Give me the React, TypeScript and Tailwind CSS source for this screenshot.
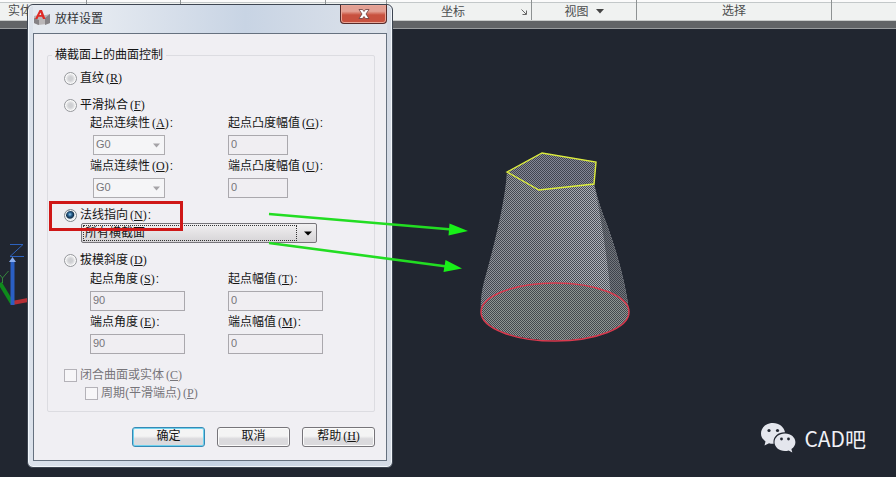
import { useState } from "react";
import type { ReactNode } from "react";

function Key({ k }: { k: string }) {
  return (
    <span className="ml-[2px] font-['Liberation_Serif',serif]">
      (<span className="underline">{k}</span>)
    </span>
  );
}

function Field({ id, label, k, children }: { id: string; label: string; k: string; children: ReactNode }) {
  return (
    <div className="flex flex-col items-start gap-1">
      <label htmlFor={id} className="h-4 leading-4 whitespace-nowrap">
        {label}
        <Key k={k} />
        <span className="ml-px">:</span>
      </label>
      {children}
    </div>
  );
}

function NumberBox({ id, value, wide }: { id: string; value: string; wide?: boolean }) {
  return (
    <input
      id={id}
      type="text"
      disabled
      defaultValue={value}
      className={`${wide ? "w-[95px]" : "w-[60px]"} h-5 border border-[#aaa8ad] bg-[#f0eef2] px-[2px] pb-[2px] font-['Liberation_Sans',sans-serif] text-[11px] text-[#77757a]`}
    />
  );
}

function ContinuityBox({ id }: { id: string }) {
  return (
    <div className="relative ml-[3px] h-5 w-[72px]">
      <select
        id={id}
        disabled
        className="block h-5 w-full appearance-none border border-[#aeacb0] bg-[#f5f5f7] px-[2px] pb-[2px] font-['Liberation_Sans',sans-serif] text-[11px] text-[#77757a] opacity-100"
      >
        <option>G0</option>
      </select>
      <svg className="pointer-events-none absolute top-2 right-[5px] h-[5px] w-[7px]" viewBox="0 0 7 5">
        <path d="M0 .5h7L3.5 4.5z" fill="#a5a3a7" />
      </svg>
    </div>
  );
}

function Radio({
  value,
  label,
  k,
  colon,
  mode,
  onPick,
}: {
  value: string;
  label: string;
  k: string;
  colon?: boolean;
  mode: string;
  onPick: (v: string) => void;
}) {
  return (
    <label className="flex h-4 items-center whitespace-nowrap">
      <input
        type="radio"
        name="surface"
        value={value}
        checked={mode === value}
        onChange={() => onPick(value)}
        className="mr-[3px] size-[13px] appearance-none rounded-full border border-[#96989c] bg-[radial-gradient(circle,#cfd0d3_25%,#eeeeef_60%)] shadow-[inset_0_0_0_1px_#fafafa] checked:border-[#7d858c] checked:bg-[radial-gradient(circle_at_45%_40%,#8fcdf0_0,#2a5f8e_22%,#12304c_42%,#e4ebf0_54%)]"
      />
      <span>
        {label}
        <Key k={k} />
        {colon && <span className="ml-px">:</span>}
      </span>
    </label>
  );
}

function Tick({ label, k }: { label: string; k: string }) {
  return (
    <label className="flex h-4 items-center whitespace-nowrap text-[#77757a]">
      <input
        type="checkbox"
        disabled
        className="mr-[3px] size-[13px] appearance-none border border-[#b4b2b8] bg-[#f7f6f8]"
      />
      <span>
        {label}
        <Key k={k} />
      </span>
    </label>
  );
}

const buttonClass =
  "h-5 w-[73px] rounded-[3px] border bg-linear-to-b from-[#f4f4f4] from-45% to-[#dbdadd] to-60% pb-[2px] leading-4";

function Ribbon() {
  return (
    <header className="shrink-0">
      <div className="flex h-[21px] border-b border-[#c9cbcb] bg-[#f0f2f1] text-[12px] text-[#4c4e4f] shadow-[inset_0_2px_0_#fbfbfb,inset_0_3px_0_#c3c8c9]">
        <div className="w-[87px] border-r border-[#8e9293] pt-[3px] pl-2 leading-4">实体</div>
        <div className="w-[94px] border-r border-[#8e9293]" />
        <div className="w-[145px] border-r border-[#8e9293]" />
        <div className="w-[61px] border-r border-[#8e9293]" />
        <div className="flex w-[145px] items-center justify-between border-r border-[#8e9293] pt-[3px] pr-1 pl-[54px] leading-4">
          坐标
          <svg className="size-[6px]" viewBox="0 0 6 6" fill="none" stroke="#666" strokeWidth="1">
            <path d="M.5.5l4.5 4.5M5.5 1.5v4h-4" />
          </svg>
        </div>
        <button type="button" className="flex w-[105px] items-center justify-center gap-[7px] border-r border-[#8e9293] pt-[3px] leading-4">
          视图
          <svg className="h-[5px] w-2" viewBox="0 0 8 5">
            <path d="M0 0h8L4 4.5z" fill="#444" />
          </svg>
        </button>
        <div className="w-[195px] border-r border-[#8e9293] pt-[3px] text-center leading-4">选择</div>
        <div className="flex-1" />
      </div>
      <div className="h-2 border-b border-[#999c9f] bg-[#626467]" />
    </header>
  );
}

function Model() {
  return (
    <svg className="pointer-events-none absolute top-0 left-0 h-[477px] w-[896px]" viewBox="0 0 896 477" fill="none">
      <defs>
        <pattern id="dots" width="2" height="2" patternUnits="userSpaceOnUse">
          <path d="M0 0h1v1H0zM1 1h1v1H1z" fill="#30343e" fillOpacity=".8" shapeRendering="crispEdges" />
        </pattern>
        <linearGradient id="side" x1="481" x2="630" y1="0" y2="0" gradientUnits="userSpaceOnUse">
          <stop offset="0" stopColor="#8e9299" />
          <stop offset=".4" stopColor="#9a9da2" />
          <stop offset=".8" stopColor="#b0b3ba" />
        </linearGradient>
        <clipPath id="solid">
          <path d="M507 172L542 153L596 162L594 184Q599 206 607 225Q624 272 629 311A74 29 0 0 1 481 311Q480 298 484 282Q505 207 507 172Z" />
        </clipPath>
      </defs>
      <g clipPath="url(#solid)">
        <path d="M470 140h170v210H470z" fill="url(#side)" />
        <path d="M594 184Q605 236 611 296L640 320V180z" fill="#74787e" />
        <path d="M507 172L542 153L596 162L594 184L539 190Z" fill="#858795" />
        <ellipse cx="555" cy="312" rx="74" ry="29" fill="#8f9593" />
        <path d="M470 140h170v210H470z" fill="url(#dots)" />
      </g>
      <ellipse cx="555" cy="312" rx="74" ry="29" stroke="#d93a4e" strokeWidth="1.5" />
      <path d="M507 172L542 153L596 162L594 184L539 190Z" stroke="#dcec3c" strokeWidth="1.4" />

      <path d="M0 283L12 303" stroke="#0f8a1c" strokeWidth="4" />
      <path d="M12 303l16-3" stroke="#b52f35" strokeWidth="4" />
      <path d="M12.500 305V260" stroke="#2a5fc4" strokeWidth="4" />
      <path d="M9 262l3.500-5 3.500 5z" fill="#8aaef0" />
      <path d="M10 244.500h13L10 256.500h14" stroke="#2d62bd" />
      <path d="M0 275l2.500 3 6-7M2.500 278v5" stroke="#35863c" />
    </svg>
  );
}

// Red frame and green arrows drawn on top of the dialog
function Marks() {
  return (
    <svg className="pointer-events-none absolute top-0 left-0 h-[477px] w-[896px]" viewBox="0 0 896 477" fill="none">
      <rect x="50.500" y="202.500" width="131" height="27" stroke="#cf1717" strokeWidth="3" />
      <path d="M269 214L452 229.500M269 243L447 266.500" stroke="#22dd22" strokeWidth="2.600" />
      <path d="M468 231L449.500 223.500L448.500 235.500ZM462 268.500L445.500 260L443.500 272Z" fill="#18f018" />
    </svg>
  );
}

function LoftDialog() {
  const [mode, setMode] = useState("normal");
  const [sections, setSections] = useState("all");

  return (
    <section
      aria-labelledby="loft-title"
      className="absolute top-1 left-[27px] w-[366px] rounded-[6px] border border-[#3d4551] bg-[#ccd5e1] bg-linear-to-r from-[#dce2eb] via-[#c6d3e4] to-[#d5dbe5] px-[5px] pb-[6px] shadow-[inset_0_0_0_1px_#f2f6fa]"
    >
      <div className="flex h-7 items-start bg-linear-to-r from-[#e4e9f0] from-20% via-[#c8d4e4] via-60% to-[#dde2ea]">
        <svg className="mt-[5px] ml-px size-4 shrink-0" viewBox="0 0 16 16">
          <path d="M0 6l4-1h8l4-1v9l-3 1-9 1-4-2z" fill="#b9b6b8" />
          <path d="M0 8l5 2v5l-5-2zM11 8l5-4v9l-5 2z" fill="#858286" />
          <path d="M1 9L5.500 0H8l3.500 9H9L8 6.800H4.500L3.500 9zM5.300 5h2L6.500 2.500z" fill="#df2b27" />
        </svg>
        <h1 id="loft-title" className="mt-[6px] ml-[5px] text-[12px] leading-4 text-[#333639]">
          放样设置
        </h1>
        <button
          type="button"
          aria-label="关闭"
          className="ml-auto flex h-[19px] w-[47px] items-center justify-center rounded-b-[4px] border border-t-0 border-[#552b2b] bg-linear-to-b from-[#e3a094] from-35% to-[#c8513f] to-55% shadow-[inset_0_0_0_1px_#e9a698]"
        >
          <svg className="h-[10px] w-3" viewBox="0 0 12 10">
            <path d="M1 .5h3.500L6 2.500 7.500.5H11L8 5l3 4.500H7.500L6 7.500 4.500 9.500H1L4 5z" fill="#fff" stroke="#693c3c" strokeWidth=".8" />
          </svg>
        </button>
      </div>

      <form className="border border-[#66717f] bg-[#f0eff3] py-[13px] pr-[11px] pl-[13px] text-[12px] text-[#151515]">
        <fieldset className="rounded-[2px] border border-[#dcdce1]">
          <legend className="ml-1 h-4 px-[3px] leading-4">横截面上的曲面控制</legend>
          <div className="px-4 pt-[7px] pb-[10px]">
            <Radio value="ruled" label="直纹" k="R" mode={mode} onPick={setMode} />
            <div className="mt-[11px]">
              <Radio value="smooth" label="平滑拟合" k="F" mode={mode} onPick={setMode} />
            </div>
            <div className="mt-[2px] grid grid-cols-[138px_1fr] gap-y-[3px] pl-[26px]">
              <Field id="start-cont" label="起点连续性" k="A">
                <ContinuityBox id="start-cont" />
              </Field>
              <Field id="start-bulge" label="起点凸度幅值" k="G">
                <NumberBox id="start-bulge" value="0" />
              </Field>
              <Field id="end-cont" label="端点连续性" k="O">
                <ContinuityBox id="end-cont" />
              </Field>
              <Field id="end-bulge" label="端点凸度幅值" k="U">
                <NumberBox id="end-bulge" value="0" />
              </Field>
            </div>

            <div className="mt-[9px]">
              <Radio value="normal" label="法线指向" k="N" colon mode={mode} onPick={setMode} />
            </div>
            <div className="relative ml-[17px] h-5 w-[236px]">
              <select
                aria-label="法线指向"
                value={sections}
                onChange={(e) => setSections(e.target.value)}
                className="block h-5 w-full appearance-none rounded-[2px] border border-[#77757a] bg-linear-to-b from-[#f1f0f1] to-[#d6d4d7] px-[3px] leading-4 outline-none"
              >
                <option value="all">所有横截面</option>
                <option value="start">起点横截面</option>
                <option value="end">端点横截面</option>
              </select>
              <span className="pointer-events-none absolute inset-y-[2px] right-5 left-[2px] border border-dotted border-[#333]" />
              <svg className="pointer-events-none absolute top-2 right-[5px] h-[5px] w-2" viewBox="0 0 8 5">
                <path d="M0 .5h8L4 4.500z" fill="#000" />
              </svg>
            </div>

            <div className="mt-[9px]">
              <Radio value="draft" label="拔模斜度" k="D" mode={mode} onPick={setMode} />
            </div>
            <div className="mt-[3px] grid grid-cols-[138px_1fr] gap-y-[3px] pl-[26px]">
              <Field id="start-angle" label="起点角度" k="S">
                <NumberBox id="start-angle" value="90" wide />
              </Field>
              <Field id="start-mag" label="起点幅值" k="T">
                <NumberBox id="start-mag" value="0" wide />
              </Field>
              <Field id="end-angle" label="端点角度" k="E">
                <NumberBox id="end-angle" value="90" wide />
              </Field>
              <Field id="end-mag" label="端点幅值" k="M">
                <NumberBox id="end-mag" value="0" wide />
              </Field>
            </div>

            <div className="mt-[13px]">
              <Tick label="闭合曲面或实体" k="C" />
            </div>
            <div className="mt-[2px] ml-[21px]">
              <Tick label="周期(平滑端点)" k="P" />
            </div>
          </div>
        </fieldset>
        <div className="mt-[15px] flex justify-end gap-3">
          <button type="button" className={`${buttonClass} border-[#3689b5] shadow-[inset_0_0_0_1px_#6fd2ee]`}>
            确定
          </button>
          <button type="button" className={`${buttonClass} border-[#77757a] shadow-[inset_0_0_0_1px_#fbfbfb]`}>
            取消
          </button>
          <button type="button" className={`${buttonClass} border-[#77757a] shadow-[inset_0_0_0_1px_#fbfbfb]`}>
            帮助
            <Key k="H" />
          </button>
        </div>
      </form>
    </section>
  );
}

export default function App() {
  return (
    <div className="relative flex min-h-screen flex-col overflow-hidden bg-[#212630] font-['Liberation_Sans','Noto_Sans_CJK_SC',sans-serif]">
      <Ribbon />
      <main className="flex flex-1 flex-col justify-end">
        <Model />
        <LoftDialog />
        <Marks />
        <div className="mr-[30px] mb-[23px] flex items-center gap-2 self-end text-[20px] leading-8 text-[#f0f1f6]">
          <svg className="h-[30px] w-[35px]" viewBox="0 0 35 30">
            <path
              d="M12 0C5 0 0 4.700 0 10.500c0 3.300 1.700 6 4.500 8L3.500 22.500l4.500-2.200c1.500.4 3 .6 4.600.5C11.500 14 17 9 24 9.300 23 3.900 18 0 12 0z"
              fill="#e4e6ed"
            />
            <path
              d="M24 10.500c-6 0-10.500 4-10.500 8.700S18 28 24 28c1.300 0 2.500-.2 3.700-.6l3.600 2-.9-3.400c2.500-1.700 4-4 4-6.800 0-4.700-4.400-8.700-10.400-8.700z"
              fill="#e4e6ed"
            />
            <g fill="#212630">
              <circle cx="8" cy="7.500" r="1.600" />
              <circle cx="16.500" cy="7.500" r="1.600" />
              <circle cx="20.500" cy="16" r="1.400" />
              <circle cx="27.500" cy="16" r="1.400" />
            </g>
          </svg>
          <span className="font-['Noto_Sans_CJK_SC',sans-serif] text-[21px]">CAD吧</span>
        </div>
      </main>
    </div>
  );
}
